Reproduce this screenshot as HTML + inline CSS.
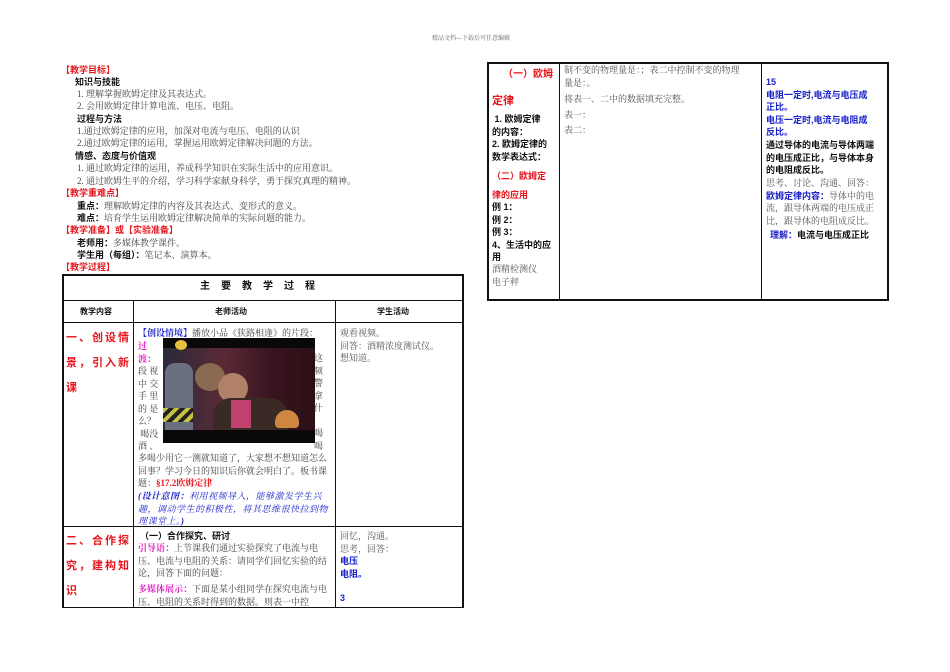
<!DOCTYPE html>
<html><head><meta charset="utf-8"><style>
body{margin:0;width:950px;height:672px;background:#fff;position:relative;overflow:hidden;font-family:"Liberation Serif","Noto Serif CJK SC","Noto Sans CJK SC",serif;font-size:9px;color:#444}
.a{position:absolute;white-space:nowrap;line-height:12px}
.r{color:#e8141c;font-weight:bold;font-family:"Liberation Sans","Noto Sans CJK SC",sans-serif}
.b{color:#111;font-weight:bold;font-family:"Liberation Sans","Noto Sans CJK SC",sans-serif}
.bl{color:#1a22c8;font-weight:bold;font-family:"Liberation Sans","Noto Sans CJK SC",sans-serif}
.m{color:#e020c0;font-weight:bold}
.ln{position:absolute;background:#111}
.g{color:#555}
</style></head><body>
<div class="a" style="left:432px;top:33px;font-size:6px;color:#666">精品文档---下载后可任意编辑</div>

<div class="a r" style="left:61px;top:64px">【教学目标】</div>
<div class="a b" style="left:75px;top:76px">知识与技能</div>
<div class="a" style="left:77px;top:88px">1. 理解掌握欧姆定律及其表达式。</div>
<div class="a" style="left:77px;top:100px">2. 会用欧姆定律计算电流、电压、电阻。</div>
<div class="a b" style="left:77px;top:113px">过程与方法</div>
<div class="a" style="left:77px;top:125px">1.通过欧姆定律的应用，加深对电流与电压、电阻的认识</div>
<div class="a" style="left:77px;top:137px">2.通过欧姆定律的运用，掌握运用欧姆定律解决问题的方法。</div>
<div class="a b" style="left:75px;top:150px">情感、态度与价值观</div>
<div class="a" style="left:77px;top:162px">1. 通过欧姆定律的运用，养成科学知识在实际生活中的应用意识。</div>
<div class="a" style="left:77px;top:175px">2. 通过欧姆生平的介绍，学习科学家献身科学，勇于探究真理的精神。</div>
<div class="a r" style="left:61px;top:187px">【教学重难点】</div>
<div class="a" style="left:77px;top:200px"><b class="b">重点：</b>理解欧姆定律的内容及其表达式、变形式的意义。</div>
<div class="a" style="left:77px;top:212px"><b class="b">难点：</b>培育学生运用欧姆定律解决简单的实际问题的能力。</div>
<div class="a r" style="left:61px;top:224px">【教学准备】或【实验准备】</div>
<div class="a" style="left:77px;top:237px"><b class="b">老师用：</b>多媒体教学课件。</div>
<div class="a" style="left:77px;top:249px"><b class="b">学生用（每组）：</b>笔记本、演算本。</div>
<div class="a r" style="left:61px;top:261px">【教学过程】</div>

<!-- left table -->
<div class="ln" style="left:62px;top:274px;width:401px;height:1.5px"></div>
<div class="ln" style="left:62px;top:300px;width:401px;height:1px"></div>
<div class="ln" style="left:62px;top:322px;width:401px;height:1px"></div>
<div class="ln" style="left:62px;top:526px;width:401px;height:1px"></div>
<div class="ln" style="left:62px;top:607px;width:401px;height:1px"></div>
<div class="ln" style="left:62px;top:274px;width:1.5px;height:334px"></div>
<div class="ln" style="left:462px;top:274px;width:1.5px;height:334px"></div>
<div class="ln" style="left:133px;top:300px;width:1px;height:308px"></div>
<div class="ln" style="left:335px;top:300px;width:1px;height:308px"></div>

<div class="a b" style="left:200px;top:281px;font-size:10px;letter-spacing:11px">主要教学过程</div>
<div class="a b" style="left:80px;top:306px;font-size:8px">教学内容</div>
<div class="a b" style="left:215px;top:306px;font-size:8px">老师活动</div>
<div class="a b" style="left:377px;top:306px;font-size:8px">学生活动</div>

<div class="a r" style="left:66px;top:326px;font-size:11px;line-height:25px;letter-spacing:2px">一、创设情<br>景，引入新<br>课</div>
<div class="a" style="left:138px;top:327px;line-height:12.5px;width:195px;white-space:normal"><b style="color:#1a22c8">【创设情境】</b>播放小品《狭路相逢》的片段：</div>
<div class="a" style="left:138px;top:340px;line-height:12.5px"><span class="m">过<br>渡：</span><br>段 视<br>中 交<br>手 里<br>的 是<br>么？<br>&nbsp;喝没<br>酒 、</div>
<div class="a" style="left:314px;top:352px;line-height:12.5px">这<br>频<br>警<br>拿<br>什<br><br>喝<br>喝</div>
<div style="position:absolute;left:163px;top:338px;width:152px;height:105px;background:#0a0808;overflow:hidden">
<div style="position:absolute;left:0;top:10px;width:152px;height:82px;background:linear-gradient(90deg,#2a2a3a,#5a2a35 40%,#3a1420 70%,#2a1015)"></div>
<div style="position:absolute;left:2px;top:25px;width:28px;height:67px;background:#6a7080;border-radius:10px 10px 0 0"></div>
<div style="position:absolute;left:0;top:70px;width:30px;height:14px;background:repeating-linear-gradient(135deg,#c8c040 0 4px,#222 4px 8px)"></div>
<div style="position:absolute;left:32px;top:25px;width:30px;height:28px;background:#8a6a50;border-radius:50%"></div>
<div style="position:absolute;left:55px;top:35px;width:30px;height:30px;background:#b08068;border-radius:50%"></div>
<div style="position:absolute;left:50px;top:60px;width:75px;height:32px;background:#3a2a25;border-radius:18px 18px 0 0"></div>
<div style="position:absolute;left:68px;top:62px;width:20px;height:28px;background:#c04070"></div>
<div style="position:absolute;left:112px;top:72px;width:24px;height:18px;background:#d08840;border-radius:12px 12px 4px 4px"></div>
<div style="position:absolute;left:12px;top:2px;width:12px;height:10px;background:#e8c040;border-radius:50%"></div>
</div>
<div class="a" style="left:138px;top:452px;line-height:12.5px;width:196px;white-space:normal">多喝少用它一测就知道了，大家想不想知道怎么回事？学习今日的知识后你就会明白了。板书课题：<b style="color:#e8141c">§17.2欧姆定律</b></div>
<div class="a" style="left:138px;top:490px;line-height:12.5px;width:196px;white-space:normal;color:#1a22c8;font-style:italic;letter-spacing:0.5px"><b>(设计意图：</b>利用视频导入，能够激发学生兴趣，调动学生的积极性，将其思维很快拉到物理课堂上。<b>)</b></div>

<div class="a g" style="left:340px;top:327px;line-height:12.5px">观看视频。<br>回答：酒精浓度测试仪。<br>想知道。</div>

<div class="a r" style="left:66px;top:529px;font-size:11px;line-height:25px;letter-spacing:2px">二、合作探<br>究，建构知<br>识</div>
<div class="a b" style="left:140px;top:530px">（一）合作探究、研讨</div>
<div class="a" style="left:138px;top:542px;line-height:12.5px;width:196px;white-space:normal"><span class="m">引导语：</span>上节课我们通过实验探究了电流与电压、电流与电阻的关系：请同学们回忆实验的结论，回答下面的问题：</div>
<div class="a" style="left:138px;top:583px;line-height:12.5px;width:196px;white-space:normal"><span class="m">多媒体展示：</span>下面是某小组同学在探究电流与电压、电阻的关系时得到的数据。则表一中控</div>
<div class="a g" style="left:340px;top:530px;line-height:12.5px">回忆，沟通。<br>思考，回答：<br><b class="bl">电压</b><br><b class="bl">电阻。</b></div>
<div class="a bl" style="left:340px;top:592px">3</div>

<!-- right table -->
<div class="ln" style="left:487px;top:62px;width:402px;height:1.5px"></div>
<div class="ln" style="left:487px;top:299px;width:402px;height:1.5px"></div>
<div class="ln" style="left:487px;top:62px;width:1.5px;height:239px"></div>
<div class="ln" style="left:887px;top:62px;width:1.5px;height:239px"></div>
<div class="ln" style="left:559px;top:62px;width:1px;height:239px"></div>
<div class="ln" style="left:761px;top:62px;width:1px;height:239px"></div>

<div class="a r" style="left:503px;top:69px;font-size:10px">（一）欧姆</div>
<div class="a r" style="left:492px;top:95px;font-size:11px">定律</div>
<div class="a b" style="left:492px;top:113px;line-height:12.5px">&nbsp;1. 欧姆定律<br>的内容：<br>2. 欧姆定律的<br>数学表达式：</div>
<div class="a r" style="left:492px;top:170px">（二）欧姆定</div>
<div class="a r" style="left:492px;top:189px">律的应用</div>
<div class="a b" style="left:492px;top:201px;line-height:12.5px">例 1：<br>例 2：<br>例 3：<br>4、生活中的应<br>用</div>
<div class="a g" style="left:492px;top:263px;line-height:12.5px">酒精检测仪<br>电子秤</div>

<div class="a g" style="left:564px;top:64px;line-height:12.5px">制不变的物理量是：；表二中控制不变的物理<br>量是：。</div>
<div class="a g" style="left:564px;top:93px">将表一、二中的数据填充完整。</div>
<div class="a g" style="left:564px;top:109px">表一：</div>
<div class="a g" style="left:564px;top:124px">表二：</div>

<div class="a bl" style="left:766px;top:76px;line-height:12.5px">15<br>电阻一定时,电流与电压成<br>正比。<br>电压一定时,电流与电阻成<br>反比。</div>
<div class="a b" style="left:766px;top:139px;line-height:12.5px">通过导体的电流与导体两端<br>的电压成正比，与导体本身<br>的电阻成反比。</div>
<div class="a g" style="left:766px;top:177px;line-height:12.5px">思考、讨论、沟通、回答：<br><b class="bl">欧姆定律内容：</b>导体中的电<br>流，跟导体两端的电压成正<br>比，跟导体的电阻成反比。</div>
<div class="a" style="left:770px;top:229px"><b class="bl">理解：</b><b class="b">电流与电压成正比</b></div>
</body></html>
